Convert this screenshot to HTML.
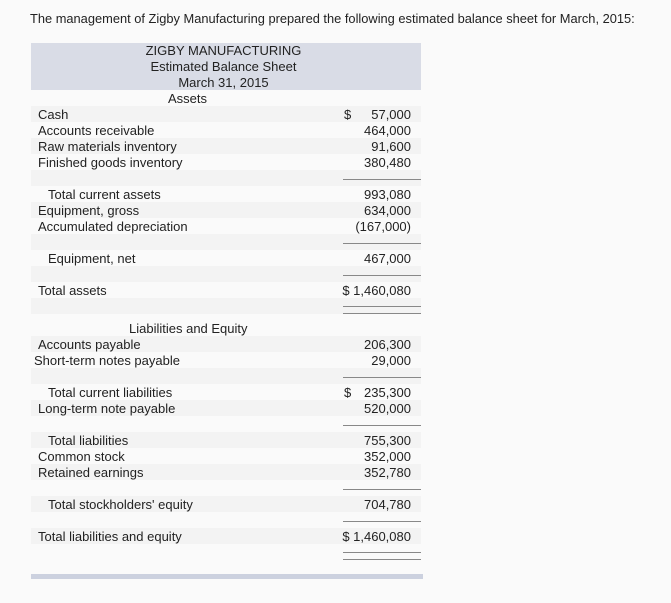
<!DOCTYPE html>
<html><head><style>
body{margin:0;width:671px;height:603px;background:#fafafa;font-family:"Liberation Sans",sans-serif;color:#222;position:relative;overflow:hidden}
.a{position:absolute;white-space:nowrap}
.r{position:absolute;left:31px;width:390px;height:16px;background:#f3f3f3}
.t{position:absolute;font-size:13px;line-height:16px;white-space:nowrap;margin-top:1px}
.v{position:absolute;right:260px;font-size:13px;line-height:16px;text-align:right;white-space:nowrap;margin-top:1px}
.l{position:absolute;left:343px;width:78px;height:1px;background:#888}
</style></head><body>
<div class="a" style="left:30px;top:11px;font-size:12.85px;line-height:16px">The management of Zigby Manufacturing prepared the following estimated balance sheet for March, 2015:</div>
<div class="a" style="left:31px;top:43px;width:390px;height:47px;background:#d9dce6"></div>
<div class="a" style="left:31px;top:43px;width:390px;text-align:center;font-size:13px;line-height:16px">
<div style="margin-left:-5px">ZIGBY MANUFACTURING<br>Estimated Balance Sheet<br>March 31, 2015</div></div>
<div class="t" style="left:168px;top:90px">Assets</div>

<div class="r" style="top:106px"></div><div class="r" style="top:138px"></div><div class="r" style="top:170px"></div>
<div class="r" style="top:202px"></div><div class="r" style="top:234px"></div><div class="r" style="top:266px"></div>
<div class="r" style="top:298px"></div><div class="r" style="top:336px"></div><div class="r" style="top:368px"></div>
<div class="r" style="top:400px"></div><div class="r" style="top:432px"></div><div class="r" style="top:464px"></div>
<div class="r" style="top:496px"></div><div class="r" style="top:528px"></div>

<div class="t" style="left:38px;top:106px">Cash</div><div class="t" style="left:344px;top:106px">$</div><div class="v" style="top:106px">57,000</div>
<div class="t" style="left:38px;top:122px">Accounts receivable</div><div class="v" style="top:122px">464,000</div>
<div class="t" style="left:38px;top:138px">Raw materials inventory</div><div class="v" style="top:138px">91,600</div>
<div class="t" style="left:38px;top:154px">Finished goods inventory</div><div class="v" style="top:154px">380,480</div>
<div class="l" style="top:179px"></div>
<div class="t" style="left:48px;top:186px">Total current assets</div><div class="v" style="top:186px">993,080</div>
<div class="t" style="left:38px;top:202px">Equipment, gross</div><div class="v" style="top:202px">634,000</div>
<div class="t" style="left:38px;top:218px">Accumulated depreciation</div><div class="v" style="top:218px">(167,000)</div>
<div class="l" style="top:243px"></div>
<div class="t" style="left:48px;top:250px">Equipment, net</div><div class="v" style="top:250px">467,000</div>
<div class="l" style="top:275px"></div>
<div class="t" style="left:38px;top:282px">Total assets</div><div class="v" style="top:282px">$ 1,460,080</div>
<div class="l" style="top:306px"></div><div class="l" style="top:313px"></div>
<div class="t" style="left:129px;top:320px">Liabilities and Equity</div>
<div class="t" style="left:38px;top:336px">Accounts payable</div><div class="v" style="top:336px">206,300</div>
<div class="t" style="left:34px;top:352px">Short-term notes payable</div><div class="v" style="top:352px">29,000</div>
<div class="l" style="top:377px"></div>
<div class="t" style="left:48px;top:384px">Total current liabilities</div><div class="t" style="left:344px;top:384px">$</div><div class="v" style="top:384px">235,300</div>
<div class="t" style="left:38px;top:400px">Long-term note payable</div><div class="v" style="top:400px">520,000</div>
<div class="l" style="top:425px"></div>
<div class="t" style="left:48px;top:432px">Total liabilities</div><div class="v" style="top:432px">755,300</div>
<div class="t" style="left:38px;top:448px">Common stock</div><div class="v" style="top:448px">352,000</div>
<div class="t" style="left:38px;top:464px">Retained earnings</div><div class="v" style="top:464px">352,780</div>
<div class="l" style="top:489px"></div>
<div class="t" style="left:48px;top:496px">Total stockholders' equity</div><div class="v" style="top:496px">704,780</div>
<div class="l" style="top:521px"></div>
<div class="t" style="left:38px;top:528px">Total liabilities and equity</div><div class="v" style="top:528px">$ 1,460,080</div>
<div class="l" style="top:552px"></div><div class="l" style="top:559px"></div>
<div class="a" style="left:31px;top:574px;width:392px;height:5px;background:#ccd1df"></div>
</body></html>
